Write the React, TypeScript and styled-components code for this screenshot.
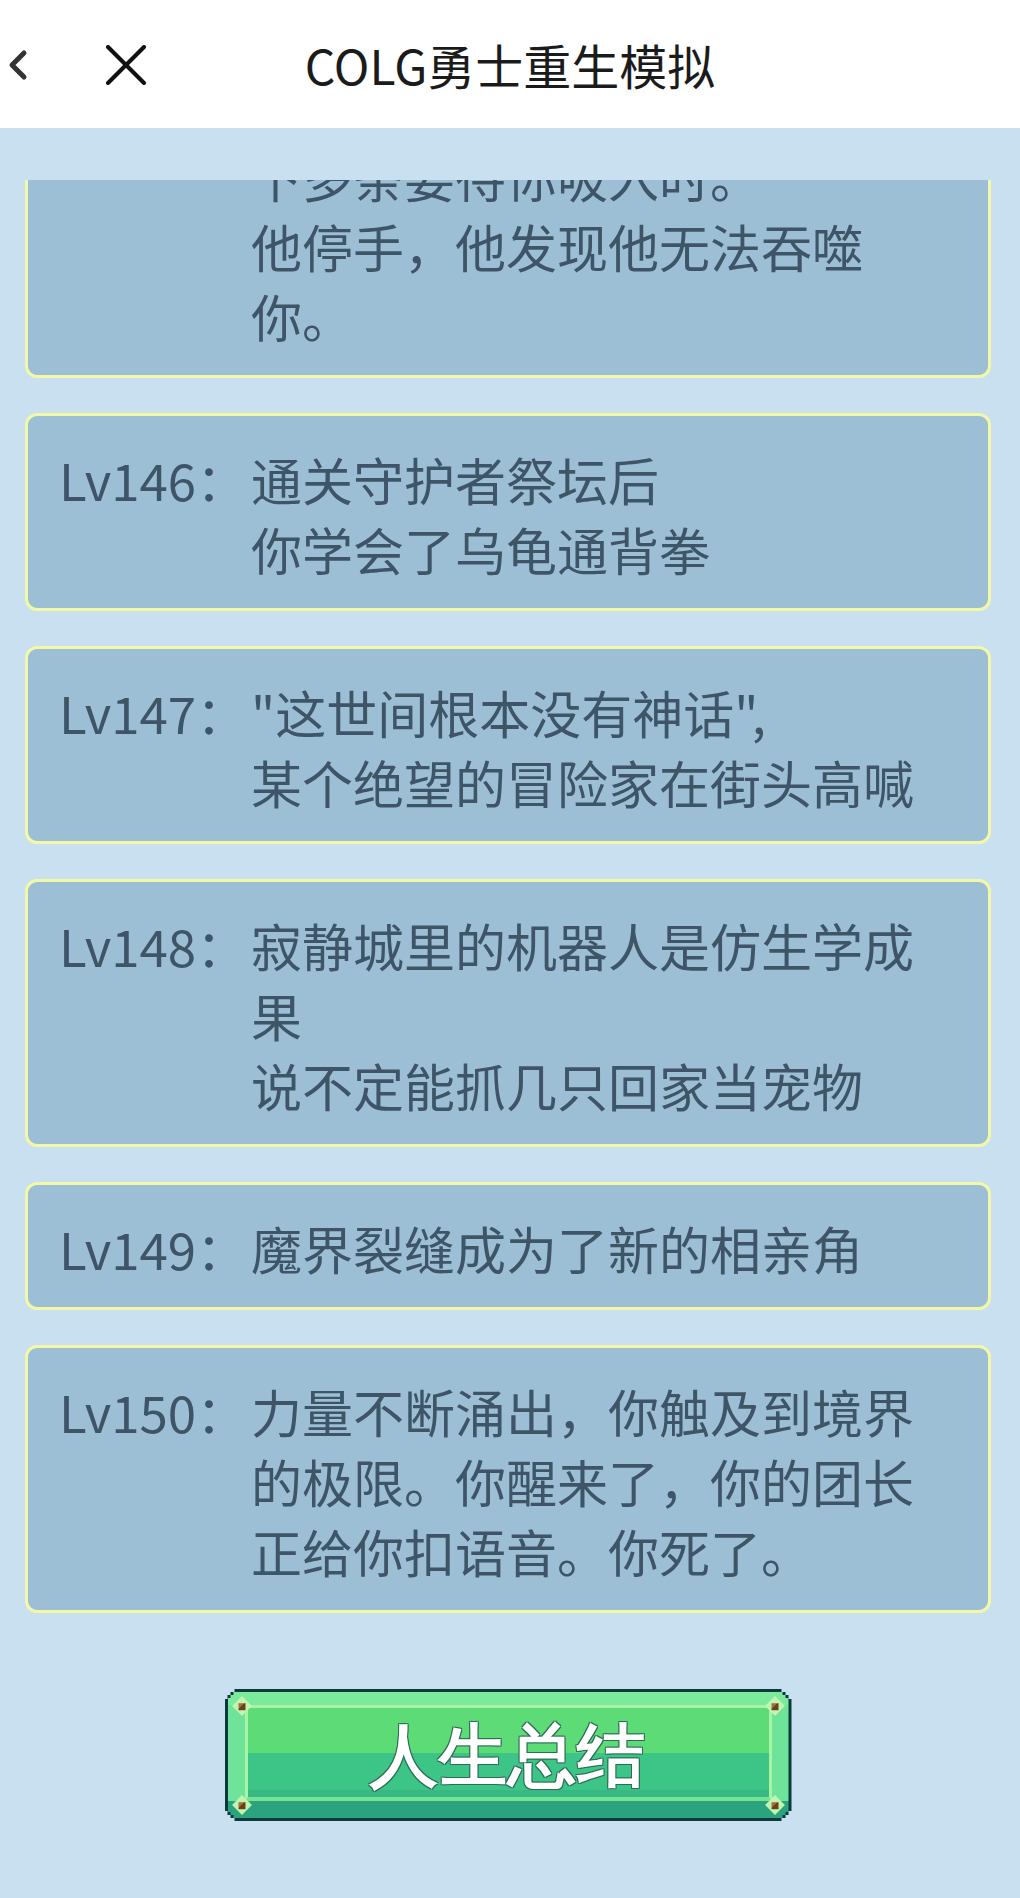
import React from 'react';
import styled, { createGlobalStyle } from 'styled-components';

type LogEntry = {
  level: number;
  text: string;
};

const GlobalStyle = createGlobalStyle`
  html, body {
    margin: 0;
    padding: 0;
  }
  body {
    background: #c9e0f0;
    font-family: "Noto Sans CJK SC", "Noto Sans", sans-serif;
  }
`;

const Page = styled.div`
  width: 1020px;
  height: 1898px;
  background: #c9e0f0;
  display: flex;
  flex-direction: column;
  overflow: hidden;
`;

const TopBar = styled.header`
  position: relative;
  z-index: 1;
  flex-shrink: 0;
  height: 128px;
  background: #ffffff;
  display: grid;
  grid-template-columns: 1fr auto 1fr;
  align-items: center;
`;

const NavButtons = styled.div`
  display: flex;
  align-items: center;
  gap: 77px;
  padding-left: 8px;
  padding-top: 2px;
`;

const IconButton = styled.span`
  display: flex;
  align-items: center;
  justify-content: center;
  cursor: pointer;
`;

const Title = styled.h1`
  margin: 0;
  font-size: 48px;
  font-weight: 400;
  line-height: 1;
  color: #1b1b1b;
  white-space: nowrap;
`;

const Content = styled.main`
  display: flex;
  flex-direction: column;
  padding: 52px 29px 0 25px;
`;

// scrolled to the bottom, so older entries slide out under the top edge
const LogList = styled.div`
  height: 1433px;
  overflow: hidden;
  display: flex;
  flex-direction: column;
  justify-content: flex-end;
  gap: 35px;
`;

const LogCard = styled.div`
  flex-shrink: 0;
  display: grid;
  grid-template-columns: 192px 1fr;
  padding: 28px 34px 24px 31px;
  background: #9dbfd6;
  border: 3px solid #f3f8a9;
  border-radius: 12px;
  color: #3e5567;
  font-size: 51px;
  line-height: 70px;
`;

const LevelLabel = styled.span`
  white-space: nowrap;
`;

const LogText = styled.span`
  white-space: pre-line;
`;

const ButtonRow = styled.div`
  display: flex;
  justify-content: center;
  margin-top: 76px;
`;

// pixel-art button: dark outline with stepped corners
const SummaryButton = styled.button`
  width: 567px;
  height: 132px;
  padding: 3px;
  border: 0;
  background: #0b3a3d;
  display: flex;
  cursor: pointer;
  clip-path: polygon(
    10px 0, calc(100% - 10px) 0, calc(100% - 10px) 3px, calc(100% - 6px) 3px,
    calc(100% - 6px) 6px, calc(100% - 3px) 6px, calc(100% - 3px) 10px, 100% 10px,
    100% calc(100% - 10px), calc(100% - 3px) calc(100% - 10px), calc(100% - 3px) calc(100% - 6px),
    calc(100% - 6px) calc(100% - 6px), calc(100% - 6px) calc(100% - 3px), calc(100% - 10px) calc(100% - 3px),
    calc(100% - 10px) 100%, 10px 100%, 10px calc(100% - 3px), 6px calc(100% - 3px),
    6px calc(100% - 6px), 3px calc(100% - 6px), 3px calc(100% - 10px), 0 calc(100% - 10px),
    0 10px, 3px 10px, 3px 6px, 6px 6px, 6px 3px, 10px 3px
  );
`;

const ButtonFrame = styled.div`
  position: relative;
  flex: 1;
  display: flex;
  padding: 13px 17px 17px;
  background: linear-gradient(
    to bottom,
    #7beb9b 0 13px,
    #6fe39a 13px calc(100% - 17px),
    #2ba37e calc(100% - 17px)
  );
  clip-path: polygon(
    6px 0, calc(100% - 6px) 0, calc(100% - 6px) 3px, calc(100% - 3px) 3px,
    calc(100% - 3px) 6px, 100% 6px, 100% calc(100% - 6px), calc(100% - 3px) calc(100% - 6px),
    calc(100% - 3px) calc(100% - 3px), calc(100% - 6px) calc(100% - 3px), calc(100% - 6px) 100%,
    6px 100%, 6px calc(100% - 3px), 3px calc(100% - 3px), 3px calc(100% - 6px), 0 calc(100% - 6px),
    0 6px, 3px 6px, 3px 3px, 6px 3px
  );
`;

const ButtonPanel = styled.div`
  flex: 1;
  display: flex;
  align-items: center;
  justify-content: center;
  border: 3px solid #a6f4a4;
  border-bottom: 4px solid #74e28f;
  background: linear-gradient(
    to bottom,
    #5ddb76 0 45px,
    #3dc588 45px 82px,
    #38b984 82px
  );
`;

const ButtonLabel = styled.span`
  font-size: 68px;
  font-weight: 700;
  line-height: 1;
  color: #ffffff;
  letter-spacing: 1px;
  padding-top: 4px;
  text-shadow:
    1px 1px 0 #2b6d55, -1px -1px 0 #2b6d55,
    1px -1px 0 #2b6d55, -1px 1px 0 #2b6d55;
`;

// little rivet on each corner of the button panel
const Gem = styled.span<{ $top: boolean; $left: boolean }>`
  position: absolute;
  ${({ $top }) => ($top ? 'top: 7px;' : 'bottom: 6px;')}
  ${({ $left }) => ($left ? 'left: 7px;' : 'right: 7px;')}
  width: 14px;
  height: 14px;
  background: #bff5b1;
  transform: rotate(45deg);
  display: flex;
  align-items: center;
  justify-content: center;

  &::after {
    content: '';
    width: 7px;
    height: 7px;
    background: linear-gradient(135deg, #a0703a 0 40%, #6e3f1c 40%);
    transform: rotate(-45deg);
  }
`;

const entries: LogEntry[] = [
  { level: 145, text: '吞噬魔伸出成百上千条触手\n下多条要待你吸入时。\n他停手，他发现他无法吞噬你。' },
  { level: 146, text: '通关守护者祭坛后\n你学会了乌龟通背拳' },
  { level: 147, text: '"这世间根本没有神话",\n某个绝望的冒险家在街头高喊' },
  { level: 148, text: '寂静城里的机器人是仿生学成果\n说不定能抓几只回家当宠物' },
  { level: 149, text: '魔界裂缝成为了新的相亲角' },
  { level: 150, text: '力量不断涌出，你触及到境界的极限。你醒来了，你的团长正给你扣语音。你死了。' },
];

const BackIcon = () => (
  <svg width="20" height="34" viewBox="0 0 20 34" fill="none">
    <polyline points="16,5 4,17 16,29" stroke="#333333" strokeWidth="5" strokeLinecap="round" strokeLinejoin="round" />
  </svg>
);

const CloseIcon = () => (
  <svg width="42" height="40" viewBox="0 0 42 40" fill="none">
    <line x1="3" y1="2" x2="39" y2="38" stroke="#111111" strokeWidth="4" strokeLinecap="round" />
    <line x1="39" y1="2" x2="3" y2="38" stroke="#111111" strokeWidth="4" strokeLinecap="round" />
  </svg>
);

const App = () => {
  return (
    <Page>
      <GlobalStyle />
      <TopBar>
        <NavButtons>
          <IconButton><BackIcon /></IconButton>
          <IconButton><CloseIcon /></IconButton>
        </NavButtons>
        <Title>COLG勇士重生模拟</Title>
        <div />
      </TopBar>
      <Content>
        <LogList>
          {entries.map((entry) => (
            <LogCard key={entry.level}>
              <LevelLabel>Lv{entry.level}：</LevelLabel>
              <LogText>{entry.text}</LogText>
            </LogCard>
          ))}
        </LogList>
        <ButtonRow>
          <SummaryButton>
            <ButtonFrame>
              <Gem $top $left />
              <Gem $top $left={false} />
              <Gem $top={false} $left />
              <Gem $top={false} $left={false} />
              <ButtonPanel>
                <ButtonLabel>人生总结</ButtonLabel>
              </ButtonPanel>
            </ButtonFrame>
          </SummaryButton>
        </ButtonRow>
      </Content>
    </Page>
  );
};

export default App;
